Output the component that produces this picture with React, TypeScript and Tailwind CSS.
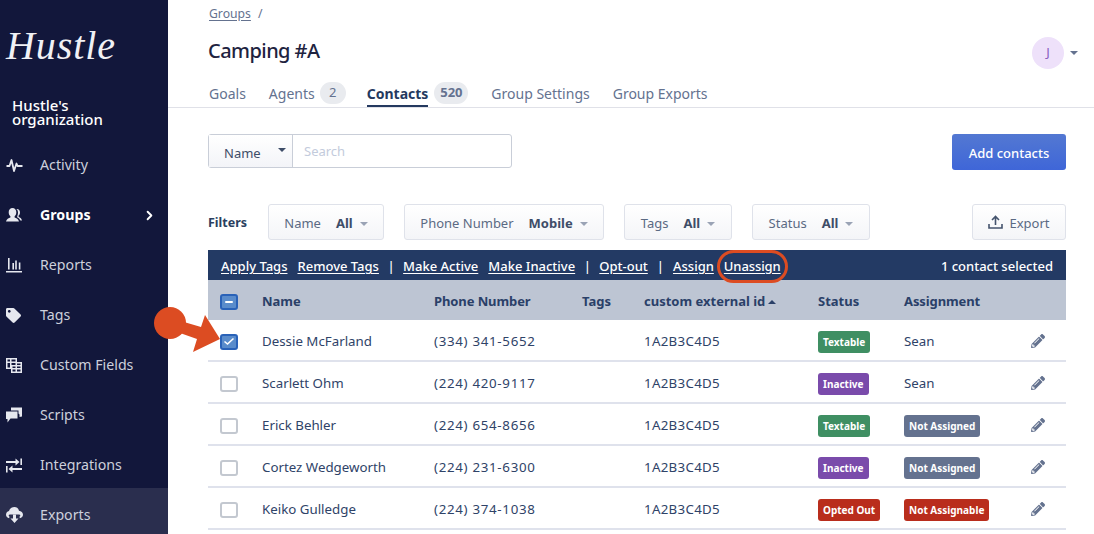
import { ChevronRight } from 'lucide-react';
import { FaPencilAlt, FaTag } from 'react-icons/fa';
import type { ReactNode } from 'react';

const sans = '[font-family:"Noto_Sans",sans-serif]';

function PulseIcon() {
  return (
    <svg width="17" height="15" viewBox="0 0 17 15" fill="none" stroke="currentColor" strokeWidth="1.8" strokeLinejoin="round">
      <path d="M0.5 8H3.5L5.5 2L8 13L10.5 5.5L11.5 8H16.5" />
    </svg>
  );
}

function GroupsIcon() {
  return (
    <svg width="16" height="14" viewBox="0 0 16 14" fill="currentColor">
      <path d="M11 1C12.8 1 14 2.6 14 4.4C14 6 13.3 7 12.4 7.8L12.8 9C14 9.4 15.4 10.2 16 12.5H14.4C13.8 11 12.6 9.8 11 9.2C11.4 8 12 6.6 12 4.6C12 3.2 11.5 2 10.4 1.1Z" />
      <path d="M6.5 0C8.8 0 10.3 1.9 10.3 4.2C10.3 6 9.6 7.4 8.6 8.2V9.4C10.2 9.9 12.6 10.8 13 13.5H0C0.4 10.8 2.8 9.9 4.4 9.4V8.2C3.4 7.4 2.7 6 2.7 4.2C2.7 1.9 4.2 0 6.5 0Z" />
    </svg>
  );
}

function ReportsIcon() {
  return (
    <svg width="16" height="15" viewBox="0 0 16 15" fill="currentColor">
      <path d="M2 0H3.6V11.5H2ZM6.4 5H8V11.5H6.4ZM9.2 2.5H10.8V11.5H9.2ZM12.8 4.5H14.4V11.5H12.8ZM0 13H16V14.6H0Z" />
    </svg>
  );
}

function TableIcon() {
  return (
    <svg width="16" height="15" viewBox="0 0 16 15" fill="currentColor">
      <path d="M0 0H11V4H16V15H5V11H0V0ZM1.5 1.5V3.5H4V1.5H1.5ZM5.5 1.5V3.5H9.5V1.5H5.5ZM1.5 5V9.5H4V5H1.5ZM5.5 5V7H9.5V5H5.5ZM11 5.5V7H14.5V5.5H11ZM6.5 8.5V10H9.5V8.5H6.5ZM11 8.5V10H14.5V8.5H11ZM6.5 11.5V13.5H9.5V11.5H6.5ZM11 11.5V13.5H14.5V11.5H11Z" fillRule="evenodd" />
    </svg>
  );
}

function ScriptsIcon() {
  return (
    <svg width="16" height="16" viewBox="0 0 16 16" fill="currentColor">
      <path d="M5 0.5H16V9.5L13.5 10V7.5L12.5 6.5V3.5H5Z" />
      <path d="M0 4.5H11.5V11.5H4.5L1.5 15.5V12H0Z" />
    </svg>
  );
}

function IntegrationsIcon() {
  return (
    <svg width="16" height="15" viewBox="0 0 16 15" fill="currentColor">
      <path d="M0 3H9.5V0.5L13.5 4L9.5 7.5V5H0Z" />
      <path d="M14.4 0.5H16V7H14.4Z" />
      <path d="M16 10H6.5V7.5L2.5 11L6.5 14.5V12H16Z" />
      <path d="M0 8H1.6V14.5H0Z" />
    </svg>
  );
}

function ExportsIcon() {
  return (
    <svg width="17" height="16" viewBox="0 0 17 16" fill="currentColor">
      <path d="M8.5 0C10.8 0 12.6 1.6 13 3.8C15.2 4 17 5.7 17 7.8C17 9.6 15.6 11 13.8 11.3L13.5 9.5C14.6 9.4 14.6 7.5 13 7H4C2.4 7.5 2.4 9.4 3.5 9.5L3.2 11.3C1.4 11 0 9.6 0 7.8C0 6 1.2 4.6 3 4.1C3.6 1.7 5.8 0 8.5 0Z" />
      <path d="M2.5 5H14.5V7.5H2.5Z" />
      <path d="M7 7.5H10V11.5H12.5L8.5 16L4.5 11.5H7Z" />
    </svg>
  );
}

const navItems: { label: string; icon: ReactNode; active?: boolean; current?: boolean }[] = [
  { label: 'Activity', icon: <PulseIcon /> },
  { label: 'Groups', icon: <GroupsIcon />, active: true },
  { label: 'Reports', icon: <ReportsIcon /> },
  { label: 'Tags', icon: <FaTag size={15} /> },
  { label: 'Custom Fields', icon: <TableIcon /> },
  { label: 'Scripts', icon: <ScriptsIcon /> },
  { label: 'Integrations', icon: <IntegrationsIcon /> },
  { label: 'Exports', icon: <ExportsIcon />, current: true },
];

type Contact = {
  name: string;
  phone: string;
  status: 'Textable' | 'Inactive' | 'Opted Out';
  assignment: string;
  checked?: boolean;
};

const contacts: Contact[] = [
  { name: 'Dessie McFarland', phone: '(334) 341-5652', status: 'Textable', assignment: 'Sean', checked: true },
  { name: 'Scarlett Ohm', phone: '(224) 420-9117', status: 'Inactive', assignment: 'Sean' },
  { name: 'Erick Behler', phone: '(224) 654-8656', status: 'Textable', assignment: 'Not Assigned' },
  { name: 'Cortez Wedgeworth', phone: '(224) 231-6300', status: 'Inactive', assignment: 'Not Assigned' },
  { name: 'Keiko Gulledge', phone: '(224) 374-1038', status: 'Opted Out', assignment: 'Not Assignable' },
];

const badgeColors: Record<string, string> = {
  Textable: 'bg-[#3f8f63]',
  Inactive: 'bg-[#7a4bab]',
  'Opted Out': 'bg-[#b92d1c]',
  'Not Assigned': 'bg-[#64728f]',
  'Not Assignable': 'bg-[#b92d1c]',
};

const cols = 'grid grid-cols-[54px_172px_148px_62px_174px_86px_127px_35px] items-center';

function Badge({ label }: { label: string }) {
  return (
    <span className={`mt-[1px] flex h-[22px] w-fit items-center rounded-[3px] px-[5px] text-[10px] font-bold text-white ${badgeColors[label]}`}>
      {label}
    </span>
  );
}

function Caret({ className = 'border-t-[#9aa3b5]' }: { className?: string }) {
  return <span className={`inline-block h-0 w-0 border-x-[4px] border-t-[4px] border-x-transparent ${className}`} />;
}

function FilterButton({ label, value, className }: { label: string; value: string; className: string }) {
  return (
    <button className={`flex h-[36px] items-center justify-center gap-[5px] rounded-[3px] border border-[#dfe2ea] bg-gradient-to-b from-white to-[#f4f5f8] pt-[3px] text-[13px] text-[#5b6a83] ${className}`}>
      <span>{label}</span>
      <span className="ml-[10px] font-bold text-[#3e4d68]">{value}</span>
      <Caret className="ml-[2px] border-t-[#9aa3b5]" />
    </button>
  );
}

function Checkbox({ state }: { state?: 'checked' | 'mixed' }) {
  if (!state) {
    return <span className="block h-[16px] w-[18px] rounded-[3px] border-2 border-[#c3c8d0] bg-white" />;
  }
  return (
    <span className="flex h-[16px] w-[18px] items-center justify-center rounded-[3px] border-2 border-[#2a62b8] bg-[#5a8ccb]">
      {state === 'checked' ? (
        <svg width="12" height="9" viewBox="0 0 12 9" fill="none" stroke="white" strokeWidth="1.6">
          <path d="M1.5 4.5L4.5 7L10.5 1.5" />
        </svg>
      ) : (
        <span className="h-[2px] w-[8px] rounded-sm bg-white" />
      )}
    </span>
  );
}

function ActionLink({ children }: { children: ReactNode }) {
  return <a className="underline underline-offset-2">{children}</a>;
}

function Sidebar() {
  return (
    <aside className="flex h-full w-[168px] shrink-0 flex-col overflow-hidden bg-[#12173b] text-[#cdd0dc]">
      <div className="h-[90px] shrink-0 pl-[6px] pt-[23px] font-['Liberation_Serif',serif] text-[40px] italic leading-[46px] tracking-[0.9px] text-[#f0f1f5]">
        Hustle
      </div>
      <div className="h-[50px] shrink-0 pl-[12px] pt-[8px] text-[15px] font-medium leading-[14px] text-white">
        Hustle's
        <br />
        organization
      </div>
      <nav className="flex flex-col">
        {navItems.map((item) => (
          <div
            key={item.label}
            className={`flex shrink-0 items-center pl-[6px] text-[14.2px] ${item.active ? 'font-bold text-white' : ''} ${item.current ? '-mt-[2px] h-[52px] bg-[#2a2e4e] pt-[2px]' : 'h-[50px]'}`}
          >
            <span className="flex w-[34px] items-center text-[#e6e8ef]">{item.icon}</span>
            <span>{item.label}</span>
            {item.active && <ChevronRight size={15} strokeWidth={3} className="ml-auto mr-[11px]" />}
          </div>
        ))}
      </nav>
    </aside>
  );
}

function Header() {
  return (
    <header className="flex h-[108px] shrink-0 flex-col border-b border-[#e0e1e8] pl-[40px] pr-[16px]">
      <div className="flex h-[28px] items-center gap-[7px] pl-[1px] text-[12.2px] text-[#64728f]">
        <a className="underline underline-offset-2">Groups</a>
        <span>/</span>
      </div>
      <div className="flex h-[44px] items-center justify-between">
        <h1 className="mt-[2px] text-[20px] font-medium tracking-[-0.55px] text-[#1e2340]">Camping #A</h1>
        <div className="mt-[6px] flex items-center gap-[6px]">
          <span className="flex h-[32px] w-[32px] items-center justify-center rounded-full bg-[#eee1fa] text-[13px] text-[#8a5cc0]">J</span>
          <Caret className="border-t-[#64728f]" />
        </div>
      </div>
      <nav className="flex h-[35px] items-end pb-[3px] pl-[1px] text-[14px] text-[#64728f]">
        <span className="mr-[23px] flex h-[22px] items-center">Goals</span>
        <span className="mr-[21px] flex h-[22px] items-center gap-[5px]">
          Agents
          <span className="flex h-[22px] w-[26px] items-center justify-center rounded-full bg-[#e9ebef] text-[13px]">2</span>
        </span>
        <span className="mr-[23px] flex h-[22px] items-center gap-[6px]">
          <span className="relative flex h-full items-center font-bold text-[#24395f] after:absolute after:inset-x-0 after:-bottom-[3px] after:h-[2px] after:bg-[#24395f]">
            Contacts
          </span>
          <span className="flex h-[22px] w-[34px] items-center justify-center rounded-full bg-[#e9ebef] text-[13px] font-bold">520</span>
        </span>
        <span className="mr-[23px] flex h-[22px] items-center">Group Settings</span>
        <span className="flex h-[22px] items-center">Group Exports</span>
      </nav>
    </header>
  );
}

function Toolbar() {
  return (
    <div className="flex items-start justify-between pt-[26px]">
      <div className="flex h-[34px] w-[304px] rounded-[3px] border border-[#c9ced8]">
        <button className="relative flex w-[84px] shrink-0 items-end justify-start border-r border-[#c9ced8] bg-gradient-to-b from-white to-[#f3f4f8] pb-[4px] pl-[15px] text-[13px] text-[#3e4d68]">
          Name
          <Caret className="absolute right-[6px] top-[13px] border-t-[#3e4d68]" />
        </button>
        <input className="min-w-0 flex-1 px-[11px] pt-[1px] text-[13px] outline-none placeholder:text-[#c3cbdc]" placeholder="Search" />
      </div>
      <button className="h-[36px] w-[114px] rounded-[3px] bg-gradient-to-b from-[#5378d2] to-[#3f66d8] pt-[3px] text-[13px] font-medium text-white">
        Add contacts
      </button>
    </div>
  );
}

function Filters() {
  return (
    <div className="mt-[34px] flex items-center">
      <span className="mr-[20px] w-[40px] pt-[3px] text-[12.5px] font-bold text-[#2b3f60]">Filters</span>
      <div className="flex gap-[20px]">
        <FilterButton label="Name" value="All" className="w-[116px]" />
        <FilterButton label="Phone Number" value="Mobile" className="w-[200px]" />
        <FilterButton label="Tags" value="All" className="w-[108px]" />
        <FilterButton label="Status" value="All" className="w-[118px]" />
      </div>
      <button className="ml-auto flex h-[36px] w-[94px] items-center justify-center gap-[6px] rounded-[3px] border border-[#dfe2ea] bg-gradient-to-b from-white to-[#f4f5f8] text-[13px] text-[#5b6a83]">
        <svg width="15" height="14" viewBox="0 0 15 14" fill="none" stroke="#44536d" strokeWidth="1.6">
          <path d="M7.5 10V1.5M4 5L7.5 1.5L11 5M1 9V13H14V9" />
        </svg>
        <span className="pt-[3px]">Export</span>
      </button>
    </div>
  );
}

function ContactsTable() {
  return (
    <div className="mt-[10px] text-[13px]">
      <div className="flex h-[30px] items-center bg-[#233a64] px-[13px] pt-[4px] text-[13px] font-medium text-white">
        <ActionLink>Apply Tags</ActionLink>
        <span className="ml-[10px]"><ActionLink>Remove Tags</ActionLink></span>
        <span className="mx-[8.5px]">|</span>
        <ActionLink>Make Active</ActionLink>
        <span className="ml-[10px]"><ActionLink>Make Inactive</ActionLink></span>
        <span className="mx-[8.5px]">|</span>
        <ActionLink>Opt-out</ActionLink>
        <span className="mx-[9px]">|</span>
        <ActionLink>Assign</ActionLink>
        <span className="relative ml-[10px] tracking-[-0.1px]">
          <ActionLink>Unassign</ActionLink>
          <span className="absolute -inset-x-[7px] -bottom-[6px] -top-[7px] rounded-full border-[3.5px] border-[#dc4c22]" />
        </span>
        <span className="ml-auto">1 contact selected</span>
      </div>
      <div className={`${cols} h-[40px] bg-[#bdc5d3] pt-[3px] font-bold text-[#2a4068]`}>
        <span className="pl-[12px]"><Checkbox state="mixed" /></span>
        <span>Name</span>
        <span className="tracking-[-0.1px]">Phone Number</span>
        <span>Tags</span>
        <span className="flex items-center gap-[3px]">
          custom external id
          <span className="h-0 w-0 border-x-[4px] border-b-[4px] border-x-transparent border-b-[#2a4068]" />
        </span>
        <span>Status</span>
        <span className="tracking-[-0.1px]">Assignment</span>
        <span />
      </div>
      {contacts.map((c) => (
        <div key={c.name} className={`${cols} h-[42px] border-b-2 border-[#dfe2ec] pt-[3px] text-[13.3px] text-[#2f4368]`}>
          <span className="pl-[12px]"><Checkbox state={c.checked ? 'checked' : undefined} /></span>
          <span>{c.name}</span>
          <span className="tracking-[0.7px]">{c.phone}</span>
          <span />
          <span className="tracking-[0.3px]">1A2B3C4D5</span>
          <span><Badge label={c.status} /></span>
          <span>{c.assignment === 'Sean' ? 'Sean' : <Badge label={c.assignment} />}</span>
          <span className="-mt-[2px] text-[#64728f]"><FaPencilAlt size={14} /></span>
        </div>
      ))}
    </div>
  );
}

export default function App() {
  return (
    <div className={`relative flex h-[534px] w-[1094px] overflow-hidden bg-white ${sans}`}>
      <Sidebar />
      <main className="flex min-w-0 flex-1 flex-col">
        <Header />
        <div className="pl-[40px] pr-[28px]">
          <Toolbar />
          <Filters />
          <ContactsTable />
        </div>
      </main>
      {/* annotation arrow over the first row */}
      <svg className="absolute left-[150px] top-[300px]" width="90" height="60" viewBox="0 0 90 60" fill="#dc4c22">
        <circle cx="20" cy="23" r="16" />
        <path d="M34 22L51 27L55 15L70 39L43 52L47 39L30 33Z" />
      </svg>
    </div>
  );
}
